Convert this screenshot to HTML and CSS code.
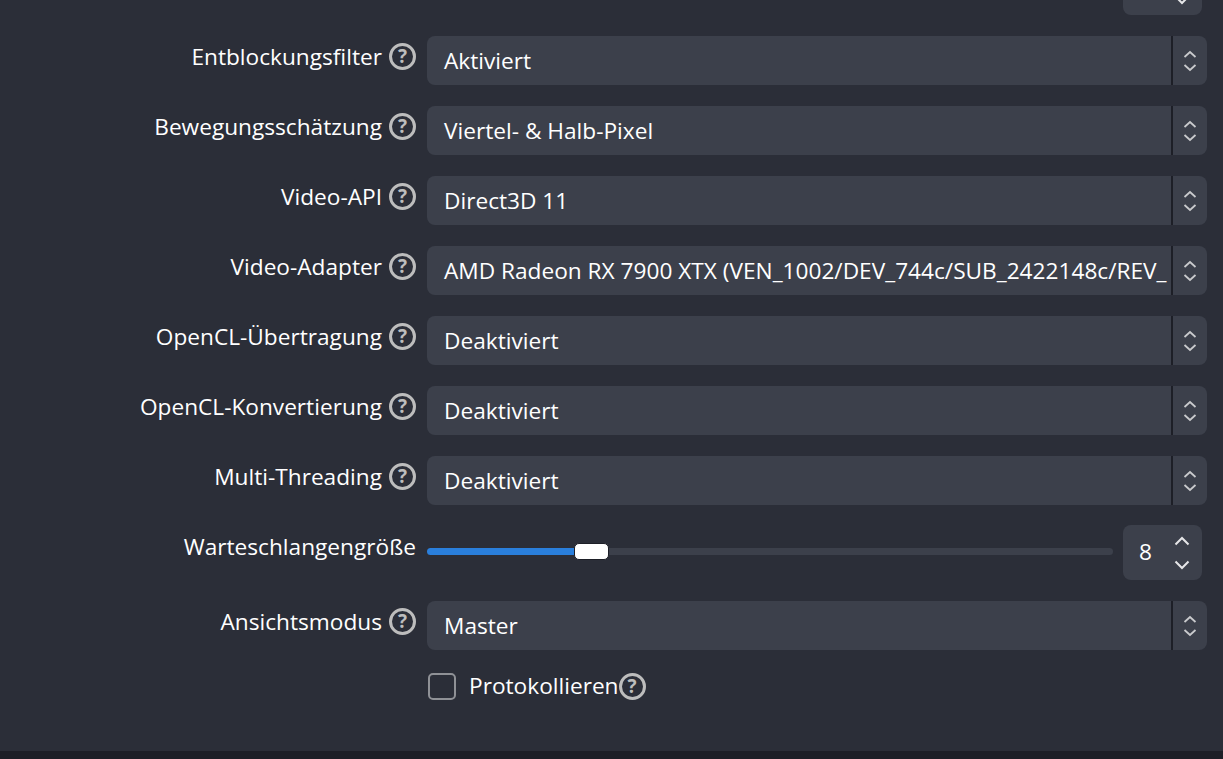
FILE: index.html
```html
<!DOCTYPE html>
<html lang="de">

<head>
    <meta charset="UTF-8">
    <title>Einstellungen</title>
    <link rel="stylesheet" href="styles.css">
</head>

<body>
    <svg class="defs" width="0" height="0">
        <symbol id="updown" viewBox="0 0 14 22">
            <path d="M1.5 7 7 2l5.5 5M1.5 15 7 20l5.5-5" fill="none" stroke="currentColor" stroke-width="1.8" />
        </symbol>
        <symbol id="up" viewBox="0 0 16 10">
            <path d="M1.5 8.5 8 2l6.5 6.5" fill="none" stroke="currentColor" stroke-width="2" />
        </symbol>
        <symbol id="down" viewBox="0 0 16 10">
            <path d="M1.5 1.5 8 8l6.5-6.5" fill="none" stroke="currentColor" stroke-width="2" />
        </symbol>
    </svg>

    <div class="main">
        <div class="form">
            <div class="row row-cut">
                <div class="label"></div>
                <div class="slider-space"></div>
                <div class="spin">
                    <span class="spin-val"></span>
                    <span class="spin-btns">
                        <svg class="spin-arrow"><use href="#up" /></svg>
                        <svg class="spin-arrow"><use href="#down" /></svg>
                    </span>
                </div>
            </div>

            <div class="row">
                <div class="label"><span class="label-text">Entblockungsfilter</span><span class="help">?</span></div>
                <div class="select"><span class="select-text">Aktiviert</span><span class="select-btn"><svg class="updown"><use href="#updown" /></svg></span></div>
            </div>
            <div class="row">
                <div class="label"><span class="label-text">Bewegungsschätzung</span><span class="help">?</span></div>
                <div class="select"><span class="select-text">Viertel- &amp; Halb-Pixel</span><span class="select-btn"><svg class="updown"><use href="#updown" /></svg></span></div>
            </div>
            <div class="row">
                <div class="label"><span class="label-text">Video-API</span><span class="help">?</span></div>
                <div class="select"><span class="select-text">Direct3D 11</span><span class="select-btn"><svg class="updown"><use href="#updown" /></svg></span></div>
            </div>
            <div class="row">
                <div class="label"><span class="label-text">Video-Adapter</span><span class="help">?</span></div>
                <div class="select"><span class="select-text">AMD Radeon RX 7900 XTX (VEN_1002/DEV_744c/SUB_2422148c/REV_</span><span class="select-btn"><svg class="updown"><use href="#updown" /></svg></span></div>
            </div>
            <div class="row">
                <div class="label"><span class="label-text">OpenCL-Übertragung</span><span class="help">?</span></div>
                <div class="select"><span class="select-text">Deaktiviert</span><span class="select-btn"><svg class="updown"><use href="#updown" /></svg></span></div>
            </div>
            <div class="row">
                <div class="label"><span class="label-text">OpenCL-Konvertierung</span><span class="help">?</span></div>
                <div class="select"><span class="select-text">Deaktiviert</span><span class="select-btn"><svg class="updown"><use href="#updown" /></svg></span></div>
            </div>
            <div class="row">
                <div class="label"><span class="label-text">Multi-Threading</span><span class="help">?</span></div>
                <div class="select"><span class="select-text">Deaktiviert</span><span class="select-btn"><svg class="updown"><use href="#updown" /></svg></span></div>
            </div>

            <div class="row row-slider">
                <div class="label"><span class="label-text">Warteschlangengröße</span></div>
                <div class="slider">
                    <div class="slider-fill"></div>
                    <div class="slider-knob"></div>
                    <div class="slider-rest"></div>
                </div>
                <div class="spin">
                    <span class="spin-val">8</span>
                    <span class="spin-btns">
                        <svg class="spin-arrow"><use href="#up" /></svg>
                        <svg class="spin-arrow"><use href="#down" /></svg>
                    </span>
                </div>
            </div>

            <div class="row">
                <div class="label"><span class="label-text">Ansichtsmodus</span><span class="help">?</span></div>
                <div class="select"><span class="select-text">Master</span><span class="select-btn"><svg class="updown"><use href="#updown" /></svg></span></div>
            </div>

            <div class="row-check">
                <span class="checkbox"></span>
                <span class="check-text">Protokollieren</span>
                <span class="help">?</span>
            </div>
        </div>
    </div>
    <div class="bottom"></div>
</body>

</html>
```

FILE: styles.css
```css
* {
    margin: 0;
    padding: 0;
    box-sizing: border-box;
}

html,
body {
    height: 100%;
    overflow: hidden;
}

body {
    display: flex;
    flex-direction: column;
    background-color: #2b2e38;
    color: #fff;
    font-family: "Open Sans", "Noto Sans", sans-serif;
    font-size: 22.67px;
}

.defs {
    position: absolute;
}

.main {
    height: 751px;
    overflow: hidden;
}

.bottom {
    flex: 1;
    background-color: #1d1f27;
}

.form {
    display: flex;
    flex-direction: column;
    gap: 21px;
    padding-right: 16px;
}

.row {
    display: flex;
    align-items: center;
    height: 49px;
}

.row-cut {
    height: 55px;
    margin-top: -40px;
    gap: 10px;
    padding-right: 5px;
}

.row-slider {
    height: 55px;
    margin-top: -1px;
    gap: 10px;
    padding-right: 5px;
}

.label {
    display: flex;
    flex: none;
    justify-content: flex-end;
    align-items: center;
    gap: 7px;
    width: 416px;
    margin-right: 11px;
    padding-bottom: 8px;
}

.row-cut .label,
.row-slider .label {
    margin-right: 1px;
    padding-bottom: 13px;
}

.label-text {
    white-space: nowrap;
}

.help {
    display: flex;
    flex: none;
    justify-content: center;
    align-items: center;
    width: 27px;
    height: 27px;
    border: 3px solid #bdbdbd;
    border-radius: 50%;
    color: #bdbdbd;
    font-size: 19px;
    font-weight: 700;
    line-height: 1;
}

.select {
    display: flex;
    flex: 1;
    min-width: 0;
    height: 49px;
    background-color: #3c404b;
    border-radius: 8px;
}

.select-text {
    flex: 1;
    min-width: 0;
    padding-left: 17px;
    line-height: 49px;
    white-space: nowrap;
    overflow: hidden;
}

.select-btn {
    display: flex;
    flex: none;
    justify-content: center;
    align-items: center;
    width: 36px;
    border-left: 2px solid #1d1f27;
    color: #c9cacd;
}

.updown {
    width: 14px;
    height: 22px;
}

.slider-space {
    flex: 1;
}

.slider {
    display: flex;
    flex: 1;
    align-items: center;
    height: 20px;
    margin-bottom: 2px;
}

.slider-fill {
    width: 148px;
    height: 7px;
    background-color: #2a7fdc;
    border-radius: 4px 0 0 4px;
}

.slider-knob {
    flex: none;
    width: 35px;
    height: 17px;
    margin-left: -1px;
    background-color: #fff;
    border: 1px solid #1d1f27;
    border-radius: 5px;
}

.slider-rest {
    flex: 1;
    height: 7px;
    background-color: #3c404b;
    border-radius: 0 4px 4px 0;
}

.spin {
    display: flex;
    flex: none;
    justify-content: space-between;
    align-items: center;
    width: 79px;
    height: 55px;
    padding: 0 12px 0 16px;
    background-color: #3c404b;
    border-radius: 8px;
}

.spin-val {
    padding-bottom: 2px;
}

.spin-btns {
    display: flex;
    flex-direction: column;
    gap: 14px;
    color: #e6e6e8;
}

.spin-arrow {
    display: block;
    width: 16px;
    height: 10px;
}

.row-check {
    display: flex;
    align-items: center;
    height: 31px;
    padding-left: 428px;
}

.checkbox {
    flex: none;
    width: 28px;
    height: 27px;
    margin-right: 13px;
    border: 2px solid #8f9196;
    border-radius: 5px;
}

.check-text {
    padding-bottom: 2px;
    white-space: nowrap;
}
```
